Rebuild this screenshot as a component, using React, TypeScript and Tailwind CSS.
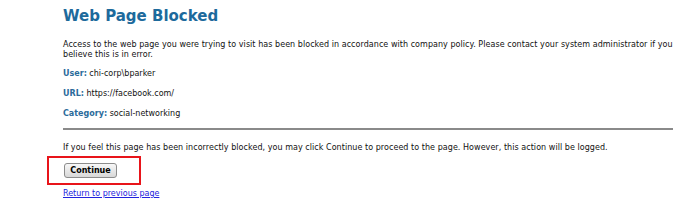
export default function App() {
  return (
    <div className="w-[695px] h-[208px] bg-white overflow-hidden" style={{ fontFamily: 'Tahoma, "DejaVu Sans", Verdana, sans-serif' }}>
      <div className="pl-[63px] pr-[14px] pt-[6px]">
        <h1 className="text-[15px] leading-[20px] font-bold text-[#1d6a9c]">Web Page Blocked</h1>
        <p className="mt-[14px] text-[8px] leading-[10px] text-[#111] tracking-[0.05px]">
          Access to the web page you were trying to visit has been blocked in accordance with company policy. Please contact your system administrator if you believe this is in error.
        </p>
        <p className="mt-[9px] text-[8px] leading-[10px] text-[#111]">
          <span className="font-bold text-[#2b6b9b]">User:</span> chi-corp\bparker
        </p>
        <p className="mt-[10px] text-[8px] leading-[10px] text-[#111]">
          <span className="font-bold text-[#2b6b9b]">URL:</span> https://facebook.com/
        </p>
        <p className="mt-[10px] text-[8px] leading-[10px] text-[#111]">
          <span className="font-bold text-[#2b6b9b]">Category:</span> social-networking
        </p>
        <div className="mt-[9px] mr-[8px] h-[2px] bg-[#8a8a8a]" />
        <p className="mt-[13px] text-[8px] leading-[10px] text-[#111] tracking-[0.05px]">
          If you feel this page has been incorrectly blocked, you may click Continue to proceed to the page. However, this action will be logged.
        </p>
        <div className="-ml-[16px] mt-[3px] w-[94px] h-[29px] border-2 border-[#e8141a] pl-[15px] pt-[5px] flex items-start">
          <button className="w-[53px] h-[15px] rounded-[3px] border border-[#8c8c8c] bg-gradient-to-b from-[#f8f8f8] to-[#d8d8d8] text-[8px] font-bold text-black leading-none">
            Continue
          </button>
        </div>
        <a className="block mt-[4px] text-[8px] leading-[10px] text-[#2222dd] underline">Return to previous page</a>
      </div>
    </div>
  )
}
